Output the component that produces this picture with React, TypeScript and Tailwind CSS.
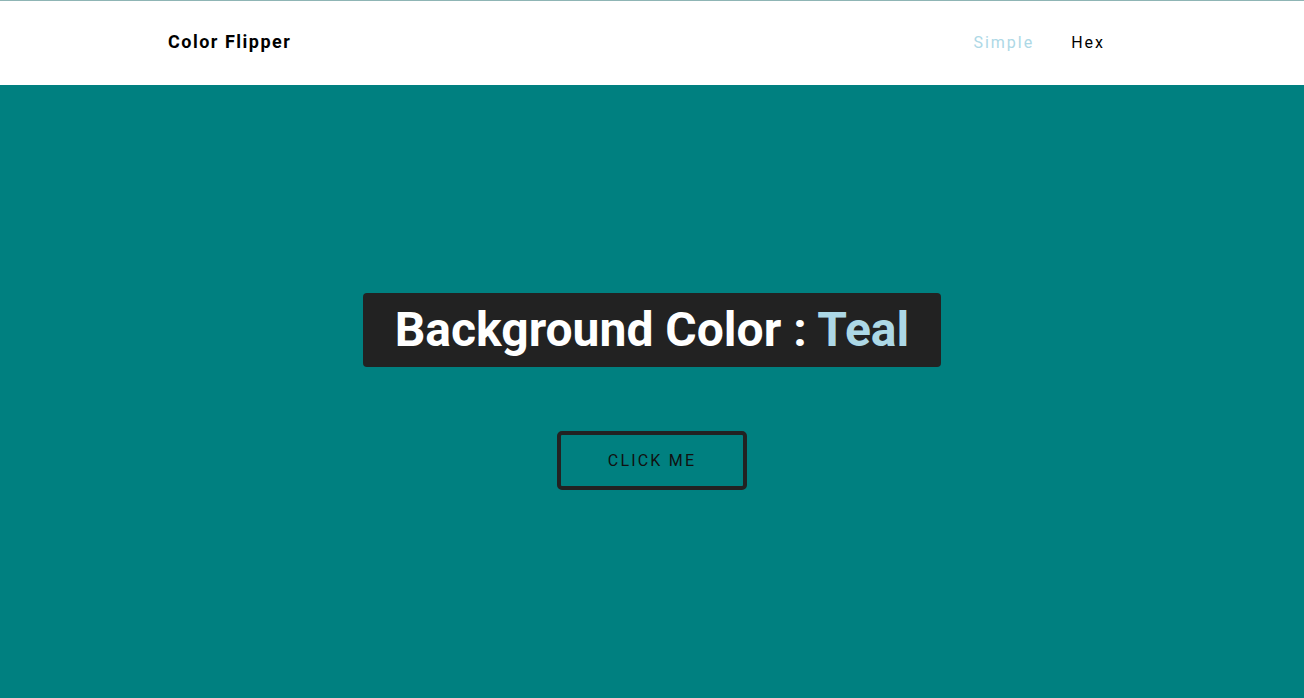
import { useState } from "react";

const COLORS = [
  { name: "Teal", value: "#008080" },
  { name: "Crimson", value: "#dc143c" },
  { name: "Steelblue", value: "#4682b4" },
  { name: "Olive", value: "#808000" },
];

export default function App() {
  const [index, setIndex] = useState(0);
  const color = COLORS[index];

  return (
    <div className="min-h-screen flex flex-col font-['Roboto',sans-serif]">
      {/* Nav */}
      <nav className="h-[85px] bg-white border-t border-[#8fb5b5] shrink-0">
        <div className="mx-auto w-[968px] h-full flex items-center justify-between">
          <h4 className="text-[18px] font-bold tracking-[1.5px] text-black leading-none -mt-[2px]">
            Color Flipper
          </h4>
          <ul className="flex items-center gap-[37px] mr-[31px] text-[16px] tracking-[2px]">
            <li>
              <a href="#" className="text-[#add8e6]">
                Simple
              </a>
            </li>
            <li>
              <a href="#" className="text-black">
                Hex
              </a>
            </li>
          </ul>
        </div>
      </nav>

      {/* Main */}
      <main
        className="flex-1 h-[613px] flex flex-col items-center justify-center gap-16"
        style={{ backgroundColor: color.value }}
      >
        <div className="bg-[#222222] rounded-[4px] px-8 h-[74px] flex items-center">
          <h2 className="text-[48px] font-bold text-white leading-none">
            Background Color :{" "}
            <span className="text-[#add8e6]">{color.name}</span>
          </h2>
        </div>
        <button
          onClick={() => setIndex((index + 1) % COLORS.length)}
          className="w-[190px] h-[59px] border-4 border-[#222222] rounded-[5px] text-[16px] tracking-[2.2px] text-[#111] uppercase"
        >
          Click me
        </button>
      </main>
    </div>
  );
}
